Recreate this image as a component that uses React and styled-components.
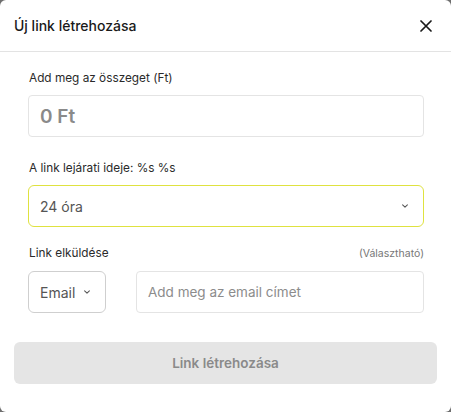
import styled, { createGlobalStyle } from "styled-components";

const GlobalStyle = createGlobalStyle`
    html, body {
        margin: 0;
        padding: 0;
        background: #6e6e6e;
        font-family: Inter, "Noto Sans", "Liberation Sans", sans-serif;
    }
    * {
        box-sizing: border-box;
    }
`

const Chevron = ({ size = 8 }) => (
    <svg width={size} height={size} viewBox="0 0 10 10" fill="none">
        <polyline points="2,3.5 5,6.5 8,3.5" stroke="#555" strokeWidth="1.3" strokeLinecap="round" strokeLinejoin="round" />
    </svg>
);

const App = () => {
    return (
        <>
            <GlobalStyle />
            <Dialog>
                <Header>
                    <Title>Új link létrehozása</Title>
                    <CloseButton aria-label="close">
                        <svg width="12" height="12" viewBox="0 0 12 12">
                            <path d="M1 1 L11 11 M11 1 L1 11" stroke="#1a1a1a" strokeWidth="1.7" strokeLinecap="round" />
                        </svg>
                    </CloseButton>
                </Header>
                <Body>
                    <Field>
                        <Label>Add meg az összeget (Ft)</Label>
                        <Input>
                            <AmountText>0 Ft</AmountText>
                        </Input>
                    </Field>
                    <Field $top={22}>
                        <Label>A link lejárati ideje: %s %s</Label>
                        <Select $active>
                            <SelectText>24 óra</SelectText>
                            <Chevron />
                        </Select>
                    </Field>
                    <Field $top={17}>
                        <LabelRow>
                            <Label>Link elküldése</Label>
                            <Optional>(Választható)</Optional>
                        </LabelRow>
                        <SendRow>
                            <Select $small>
                                <SelectText>Email</SelectText>
                                <Chevron />
                            </Select>
                            <Input $grow>
                                <Placeholder>Add meg az email címet</Placeholder>
                            </Input>
                        </SendRow>
                    </Field>
                </Body>
                <Footer>
                    <SubmitButton disabled>Link létrehozása</SubmitButton>
                </Footer>
            </Dialog>
        </>
    );
};

export default App;

const Dialog = styled.div`
    width: 451px;
    height: 412px;
    background: #fff;
    border-radius: 6px;
    display: flex;
    flex-direction: column;
`

const Header = styled.div`
    height: 52px;
    padding: 0 14px;
    border-bottom: 1px solid #e3e3e3;
    display: flex;
    flex-direction: row;
    justify-content: space-between;
    align-items: center;
`

const Title = styled.div`
    font-size: 14px;
    font-weight: 500;
    color: #1a1a1a;
`

const CloseButton = styled.button`
    border: none;
    background: none;
    padding: 0;
    margin-right: 5px;
    display: flex;
    align-items: center;
    cursor: pointer;
`

const Body = styled.div`
    padding: 17px 27px 0 28px;
    display: flex;
    flex-direction: column;
`

const Field = styled.div`
    margin-top: ${p => p.$top || 0}px;
    display: flex;
    flex-direction: column;
    gap: 8px;
`

const Label = styled.div`
    font-size: 11.8px;
    line-height: 18px;
    color: #2a2a2a;
    padding-left: 1px;
`

const LabelRow = styled.div`
    display: flex;
    justify-content: space-between;
    align-items: center;
`

const Optional = styled.div`
    font-size: 10.5px;
    color: #777;
`

const Input = styled.div`
    flex: ${p => (p.$grow ? "1" : "none")};
    height: 42px;
    border: 1px solid #e4e4e4;
    border-radius: 4px;
    padding: 0 11px;
    display: flex;
    align-items: center;
`

const AmountText = styled.span`
    font-size: 19px;
    font-weight: 600;
    color: #8a8a8a;
`

const Placeholder = styled.span`
    font-size: 13.5px;
    color: #8c8c8c;
`

const Select = styled.div`
    height: 42px;
    width: ${p => (p.$small ? "78px" : "auto")};
    border: 1px solid ${p => (p.$active ? "#dfe240" : "#cfcfcf")};
    border-radius: 6px;
    padding: ${p => (p.$small ? "0 14px 0 11px" : "0 14px 0 11px")};
    display: flex;
    justify-content: space-between;
    align-items: center;
`

const SelectText = styled.span`
    font-size: 14px;
    color: #555;
`

const SendRow = styled.div`
    display: flex;
    flex-direction: row;
    gap: 30px;
    margin-top: 1px;
`

const Footer = styled.div`
    padding: 29px 14px 0 14px;
`

const SubmitButton = styled.button`
    width: 100%;
    height: 42px;
    border: none;
    border-radius: 6px;
    background: #e5e5e5;
    color: #8a8a8a;
    font-family: inherit;
    font-size: 13.5px;
    font-weight: 600;
`
